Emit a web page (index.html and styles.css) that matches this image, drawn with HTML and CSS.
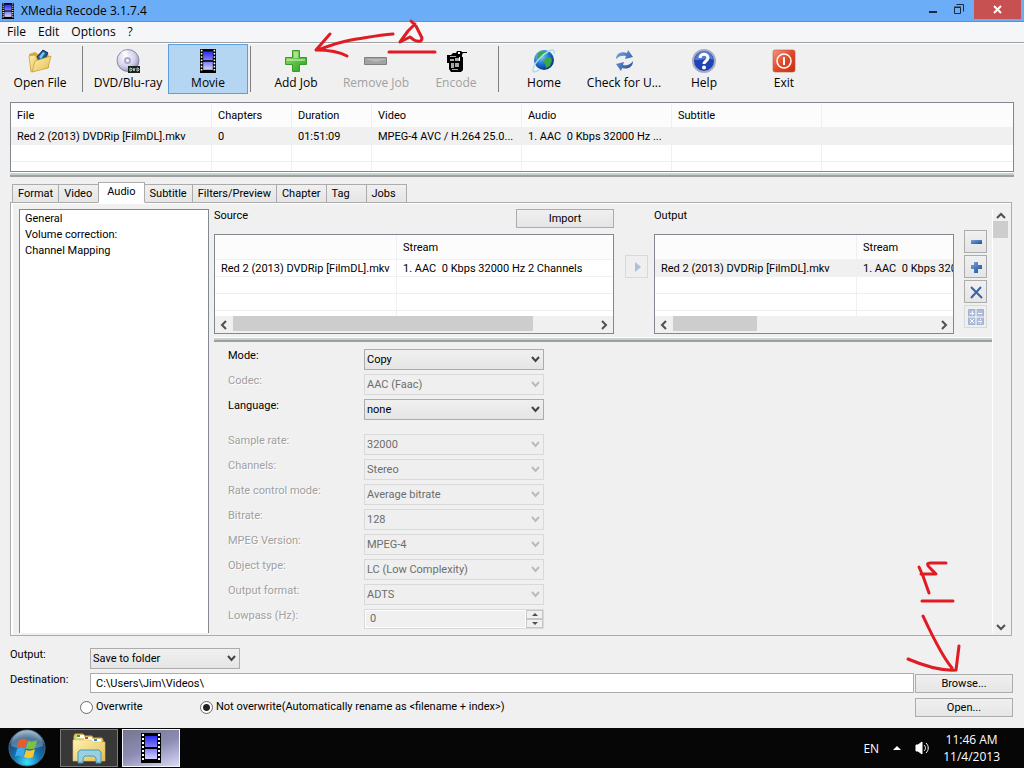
FILE: index.html
```html
<!DOCTYPE html>
<html lang="en">
<head>
	<meta charset="utf-8">
	<title>XMedia Recode 3.1.7.4</title>
	<link rel="stylesheet" href="styles.css">
</head>
<body>
	<!-- shared icons -->
	<svg class="defs" aria-hidden="true">
		<defs>
			<linearGradient id="frame" x1="0" y1="0" x2="0" y2="1">
				<stop offset="0" stop-color="#2a2af0"/><stop offset="1" stop-color="#8080f8"/>
			</linearGradient>
			<linearGradient id="frame2" x1="0" y1="0" x2="0" y2="1">
				<stop offset="0" stop-color="#8080f8"/><stop offset="1" stop-color="#d4d4fc"/>
			</linearGradient>
			<linearGradient id="green" x1="0" y1="0" x2="1" y2="1">
				<stop offset="0" stop-color="#9be06e"/><stop offset="1" stop-color="#26a01c"/>
			</linearGradient>
			<linearGradient id="blue" x1="0" y1="0" x2="1" y2="1">
				<stop offset="0" stop-color="#7ba7de"/><stop offset="1" stop-color="#1c4c96"/>
			</linearGradient>
			<linearGradient id="red" x1="0" y1="0" x2="1" y2="1">
				<stop offset="0" stop-color="#f4967e"/><stop offset=".5" stop-color="#e0492a"/><stop offset="1" stop-color="#cc2c08"/>
			</linearGradient>
			<linearGradient id="paper" x1="0" y1="0" x2="1" y2="1">
				<stop offset="0" stop-color="#fdf3b4"/><stop offset="1" stop-color="#e6bd4c"/>
			</linearGradient>
			<radialGradient id="disc" cx=".4" cy=".35" r=".7">
				<stop offset="0" stop-color="#fff"/><stop offset=".6" stop-color="#d3d0ec"/><stop offset="1" stop-color="#8d8ab4"/>
			</radialGradient>
			<radialGradient id="earth" cx=".35" cy=".3" r=".8">
				<stop offset="0" stop-color="#8fd6ff"/><stop offset=".5" stop-color="#1e75cf"/><stop offset="1" stop-color="#06246e"/>
			</radialGradient>
			<radialGradient id="orb" cx=".5" cy=".9" r=".9">
				<stop offset="0" stop-color="#3fe0ff"/><stop offset=".4" stop-color="#1377b5"/><stop offset=".75" stop-color="#1a4a78"/><stop offset="1" stop-color="#8fb3c9"/>
			</radialGradient>
			<symbol id="film" viewBox="0 0 20 30">
				<path fill="#000" d="M0 0h20v30H0z"/>
				<path fill="url(#frame)" d="M4 3h12v11H4z"/>
				<path fill="url(#frame2)" d="M4 16h12v10H4z"/>
				<path stroke="#fff" stroke-width="2" stroke-dasharray="2 2" d="M2 1v28M18 1v28"/>
			</symbol>
		</defs>
	</svg>

	<header class="titlebar">
		<svg class="title-icon" viewBox="0 0 20 30" preserveAspectRatio="none"><use href="#film"/></svg>
		<h1>XMedia Recode 3.1.7.4</h1>
		<button class="win-btn" aria-label="Minimize"><svg width="26" height="19"><path fill="#1c2a3c" d="M9 11h8v2H9z"/></svg></button>
		<button class="win-btn" aria-label="Restore"><svg width="26" height="19" fill="none" stroke="#1c2a3c"><path d="M10.500 4.500h7v7"/><path d="M8.500 7.500h6v6h-6z"/><path d="M8 7h7"/></svg></button>
		<button class="win-btn close" aria-label="Close"><svg width="47" height="19"><path stroke="#fff" stroke-width="2" d="M20 6l7 7M27 6l-7 7"/></svg></button>
	</header>

	<nav class="menubar">
		<a href="#">File</a>
		<a href="#">Edit</a>
		<a href="#">Options</a>
		<a href="#">?</a>
	</nav>

	<div class="toolbar">
		<button class="tool">
			<svg viewBox="0 0 24 24"><path fill="#d9a93c" d="M1 5l6-2 3 2 9-1 2 3v12L3 22z"/><path fill="#1d5b97" stroke="#0c2e52" d="M8 9l7-8 5 3-5 9z"/><path fill="#7cc4ee" d="M11 8l4-5 2 1-4 6z"/><path fill="url(#paper)" stroke="#c89a35" stroke-width=".7" d="M1 7l6-1 2 3 1 12-7 2z"/><path fill="url(#paper)" stroke="#c89a35" stroke-width=".7" d="M7 12l16-5-3 12-16 4z"/></svg>
			<span>Open File</span>
		</button>
		<span class="sep"></span>
		<button class="tool">
			<svg viewBox="0 0 24 24"><circle cx="12" cy="11.500" r="11" fill="url(#disc)" stroke="#77779a" stroke-width=".8"/><path fill="#fff" opacity=".7" d="M12 11L5 3l6-2z"/><circle cx="11.500" cy="11.500" r="3.500" fill="#a9a7d2"/><circle cx="11.500" cy="11.500" r="1.500" fill="#fff"/><path fill="#182420" d="M12 17h12v7H12z"/><path fill="none" stroke="#dfe8e2" stroke-width=".8" d="M14 19v3h1l1-1v-1l-1-1zM17 19l1 3 1-3M21 19v3h1l1-1v-1l-1-1z"/></svg>
			<span>DVD/Blu-ray</span>
		</button>
		<button class="tool active">
			<svg viewBox="0 0 24 24"><use href="#film" x="4" y="0" width="16" height="24"/></svg>
			<span>Movie</span>
		</button>
		<span class="sep"></span>
		<button class="tool">
			<svg viewBox="0 0 24 24"><path fill="url(#green)" stroke="#3c9a2c" d="M8.500 1.500h7v7h7v7h-7v7h-7v-7h-7v-7h7z"/><path fill="#d7f5c4" opacity=".55" d="M10 3h4v6h-4zM3 10h18v2H3z"/></svg>
			<span>Add Job</span>
		</button>
		<button class="tool" disabled>
			<svg viewBox="0 0 24 24"><path fill="#a3a3a3" stroke="#808080" d="M.500 8.500h22v7H.500z"/><path fill="#b8b8b8" d="M2 10h20l-10 3z"/></svg>
			<span>Remove Job</span>
		</button>
		<button class="tool" disabled>
			<svg viewBox="0 0 24 24"><path fill="#000" d="M3 6h4l2-2h3l1-2h4l1 1h5v1h-4l-1 2v2h1v13l-2 2H7l-2-3v-6H3z"/><path fill="#a8a8a8" d="M6 7h6v1H6zM6 10h4v2H6zM11 9h4v3h-4zM7 14h3v5H7zM11 14h4v4h-4zM8 20h6v1H8z"/><path fill="#fff" d="M14 3h2v2h-2zM15 8h1v4h-1z"/></svg>
			<span>Encode</span>
		</button>
		<span class="sep"></span>
		<button class="tool">
			<svg viewBox="0 0 24 24"><circle cx="12" cy="11" r="10" fill="url(#earth)"/><path fill="#37a845" d="M6 4l4-2 4 1-2 4-3 1-1 3-3-2zM14 9l4-1 2 3-2 6-4 2-1-4-2-2z"/><path fill="none" stroke="#aadcf8" stroke-width="1.500" d="M22 5c1-4-1-5-5-3C9 6 1 16 1 21c0 3 4 2 7-1"/></svg>
			<span>Home</span>
		</button>
		<button class="tool">
			<svg viewBox="0 0 24 24"><path fill="url(#blue)" d="M4 10C4 5 9 2 15 4l1-3 5 7-8 2 1-3C10 6 7 7 4 10zM21 12c0 6-5 9-11 7l-1 3-5-7 8-2-1 3c4 1 7 0 10-4z"/></svg>
			<span>Check for U...</span>
		</button>
		<button class="tool">
			<svg viewBox="0 0 24 24"><circle cx="12" cy="12" r="11" fill="#1f43b4" stroke="#a4abc4" stroke-width="2"/><path fill="#7c9bea" opacity=".6" d="M3 11a9 9 0 0 1 18 0c-5-3-12 1-18 0z"/><path fill="none" stroke="#fff" stroke-width="3" d="M8 9c0-5 8-5 8 0 0 3-4 3-4 6"/><circle cx="12" cy="18.500" r="2" fill="#fff"/></svg>
			<span>Help</span>
		</button>
		<button class="tool">
			<svg viewBox="0 0 24 24"><rect x="1" y="1" width="22" height="22" rx="2" fill="url(#red)" stroke="#b8573c" stroke-width=".6"/><circle cx="12" cy="12" r="7" fill="none" stroke="#fff" stroke-width="1.500"/><path stroke="#fff" stroke-width="2" d="M12 8v8"/></svg>
			<span>Exit</span>
		</button>

		<!-- pen marks over the Add Job button -->
		<svg class="pen pen-top" width="130" height="50" viewBox="310 14 130 50">
			<path d="M393 34c-15 1-28 4-42 6-12 2-20 5-33 10M330 34l-14 16c12 0 22 1 31 6M411 21l5 5 6 12c0 4-4 4-8 2l-4-3-10 5 8-11 7-7M389 52h46"/>
		</svg>
	</div>

	<main class="window">
		<div class="list files">
			<table>
				<colgroup><col class="c-file"><col class="c-short"><col class="c-short"><col class="c-mid"><col class="c-mid"><col class="c-mid"><col></colgroup>
				<thead>
					<tr><th>File</th><th>Chapters</th><th>Duration</th><th>Video</th><th>Audio</th><th>Subtitle</th><th></th></tr>
				</thead>
				<tbody>
					<tr class="selected"><td>Red 2 (2013) DVDRip [FilmDL].mkv</td><td>0</td><td>01:51:09</td><td>MPEG-4 AVC / H.264 25.0...</td><td>1. AAC&nbsp; 0 Kbps 32000 Hz ...</td><td></td><td></td></tr>
					<tr><td></td><td></td><td></td><td></td><td></td><td></td><td></td></tr>
					<tr><td></td><td></td><td></td><td></td><td></td><td></td><td></td></tr>
				</tbody>
			</table>
		</div>
		<div class="splitter"></div>

		<div class="tabs" role="tablist">
			<button role="tab">Format</button>
			<button role="tab">Video</button>
			<button role="tab" class="current" aria-selected="true">Audio</button>
			<button role="tab">Subtitle</button>
			<button role="tab">Filters/Preview</button>
			<button role="tab">Chapter</button>
			<button role="tab">Tag</button>
			<button role="tab">Jobs</button>
		</div>

		<section class="panel">
			<ul class="tree">
				<li>General</li>
				<li>Volume correction:</li>
				<li>Channel Mapping</li>
			</ul>

			<div class="content">
				<div class="streams">
					<div class="stream">
						<div class="stream-head">
							<h2>Source</h2>
							<button class="btn">Import</button>
						</div>
						<div class="list">
							<div class="rows">
								<table>
									<colgroup><col class="c-name"><col></colgroup>
									<thead><tr><th></th><th>Stream</th></tr></thead>
									<tbody>
										<tr><td>Red 2 (2013) DVDRip [FilmDL].mkv</td><td>1. AAC&nbsp; 0 Kbps 32000 Hz 2 Channels</td></tr>
										<tr><td></td><td></td></tr>
										<tr><td></td><td></td></tr>
										<tr><td></td><td></td></tr>
									</tbody>
								</table>
							</div>
							<div class="hscroll">
								<button aria-label="Scroll left"><svg width="8" height="10"><path d="M6 1L2 5l4 4"/></svg></button>
								<div class="track"><div class="thumb wide"></div></div>
								<button aria-label="Scroll right"><svg width="8" height="10"><path d="M2 1l4 4-4 4"/></svg></button>
							</div>
						</div>
					</div>

					<button class="icon-btn move" disabled aria-label="Add stream"><svg width="16" height="16"><path fill="#9db4d6" d="M6 3l6 5-6 5z"/></svg></button>

					<div class="stream">
						<div class="stream-head">
							<h2>Output</h2>
						</div>
						<div class="list">
							<div class="rows">
								<table>
									<colgroup><col class="c-name out"><col></colgroup>
									<thead><tr><th></th><th>Stream</th></tr></thead>
									<tbody>
										<tr class="selected"><td>Red 2 (2013) DVDRip [FilmDL].mkv</td><td class="clip">1. AAC&nbsp; 0 Kbps 32000 Hz 2 Channels</td></tr>
										<tr><td></td><td></td></tr>
										<tr><td></td><td></td></tr>
										<tr><td></td><td></td></tr>
									</tbody>
								</table>
							</div>
							<div class="hscroll">
								<button aria-label="Scroll left"><svg width="8" height="10"><path d="M6 1L2 5l4 4"/></svg></button>
								<div class="track"><div class="thumb narrow"></div></div>
								<button aria-label="Scroll right"><svg width="8" height="10"><path d="M2 1l4 4-4 4"/></svg></button>
							</div>
						</div>
					</div>

					<div class="side">
						<button class="icon-btn" aria-label="Remove"><svg width="16" height="16"><path fill="url(#blue)" d="M3 6h11v4H3z"/></svg></button>
						<button class="icon-btn" aria-label="Add"><svg width="16" height="16"><path fill="url(#blue)" d="M6 3h4v3h4v4h-4v4H6v-4H3V6h3z"/></svg></button>
						<button class="icon-btn" aria-label="Delete"><svg width="16" height="16"><path stroke="#3a62a8" stroke-width="2" d="M3 3l11 11M13 3L3 14"/></svg></button>
						<button class="icon-btn" disabled aria-label="Calculator"><svg width="18" height="18"><path fill="#9fb3d6" stroke="#8fa5ca" d="M1.500 1.500h15v15h-15z"/><path stroke="#fff" d="M3 5.500h4M5.500 3v4M11 5.500h4M3 11l4 4M7 11l-4 4M11 13.500h4M13.500 11v1M13.500 15v1M9 1v16M1 9h16"/></svg></button>
					</div>
				</div>
				<div class="splitter"></div>

				<form class="settings">
					<div class="fields">
						<label for="mode">Mode:</label>
						<select id="mode"><option>Copy</option></select>
						<label for="codec" class="off">Codec:</label>
						<select id="codec" disabled><option>AAC (Faac)</option></select>
						<label for="language">Language:</label>
						<select id="language"><option>none</option></select>
					</div>
					<div class="fields">
						<label for="samplerate" class="off">Sample rate:</label>
						<select id="samplerate" disabled><option>32000</option></select>
						<label for="channels" class="off">Channels:</label>
						<select id="channels" disabled><option>Stereo</option></select>
						<label for="ratemode" class="off">Rate control mode:</label>
						<select id="ratemode" disabled><option>Average bitrate</option></select>
						<label for="bitrate" class="off">Bitrate:</label>
						<select id="bitrate" disabled><option>128</option></select>
						<label for="mpeg" class="off">MPEG Version:</label>
						<select id="mpeg" disabled><option>MPEG-4</option></select>
						<label for="objecttype" class="off">Object type:</label>
						<select id="objecttype" disabled><option>LC (Low Complexity)</option></select>
						<label for="format" class="off">Output format:</label>
						<select id="format" disabled><option>ADTS</option></select>
						<label for="lowpass" class="off">Lowpass (Hz):</label>
						<div class="spin">
							<input id="lowpass" type="text" value="0" disabled>
							<div class="spin-btns">
								<button type="button" disabled aria-label="Increase"><svg width="6" height="3"><path d="M0 3l3-3 3 3z"/></svg></button>
								<button type="button" disabled aria-label="Decrease"><svg width="6" height="3"><path d="M0 0l3 3 3-3z"/></svg></button>
							</div>
						</div>
					</div>
				</form>
			</div>

			<div class="vscroll">
				<button aria-label="Scroll up"><svg width="10" height="7"><path d="M1 6l4-4 4 4"/></svg></button>
				<div class="track"><div class="thumb"></div></div>
				<button aria-label="Scroll down"><svg width="10" height="7"><path d="M1 1l4 4 4-4"/></svg></button>
			</div>
		</section>

		<form class="target">
			<label for="output">Output:</label>
			<select id="output"><option>Save to folder</option></select>
			<span></span>
			<label for="destination">Destination:</label>
			<input id="destination" type="text" value="C:\Users\Jim\Videos\">
			<button type="button" class="btn">Browse...</button>
			<span></span>
			<div class="radios">
				<label><input type="radio" name="overwrite">Overwrite</label>
				<label><input type="radio" name="overwrite" checked>Not overwrite(Automatically rename as &lt;filename + index&gt;)</label>
			</div>
			<button type="button" class="btn">Open...</button>

			<!-- pen marks pointing at Browse -->
			<svg class="pen pen-bottom" width="60" height="120" viewBox="904 556 60 120">
				<path d="M946 563h-15c-6 0-3 3 0 6l5 5h-15M919 567l4 9 6 17M922 601h31M923 616c7 15 18 39 29 52M959 646l-3 24c-14 1-34-5-48-11"/>
			</svg>
		</form>
	</main>

	<footer class="taskbar">
		<button class="start" aria-label="Start">
			<svg width="38" height="38" viewBox="0 0 38 38"><circle cx="19" cy="19" r="18" fill="url(#orb)" stroke="#4a6b80"/><path fill="#fff" opacity=".25" d="M3 17a16 16 0 0 1 32 0c-10 4-22 4-32 0z"/><path fill="#ee5a24" d="M11 11c3-2 5-1 8 0l-2 8c-3-1-5-2-8 0z"/><path fill="#7dc142" d="M20 12c3 1 5 1 9-1l-2 8c-4 2-6 1-9 0z"/><path fill="#3fa9ea" d="M9 20c3-2 5-1 8 0l-2 8c-3-1-5-2-8 0z"/><path fill="#fbc62d" d="M18 21c3 1 5 1 9-1l-2 8c-4 2-6 1-9 0z"/></svg>
		</button>
		<button class="task" aria-label="Explorer">
			<svg width="34" height="32" viewBox="0 0 34 32"><path fill="#e2cc7c" stroke="#c7a94f" d="M2 4l1-2h8l2 2h7l1 2h9l1 2v20H2z"/><path fill="#fff" d="M5 3h7v3H5zM12 5h8v3h-8zM20 7h9v3h-9z"/><path fill="#1fa33a" d="M5 3h3v2H5z"/><path fill="#d2401f" d="M13 5h3v2h-3z"/><path fill="#2b8bd0" d="M22 7h3v2h-3z"/><path fill="url(#paper)" stroke="#d6bb66" stroke-width=".6" d="M1 8h18l2 2h12v19H1z"/><path fill="#8fd0ee" fill-opacity=".9" stroke="#4797bd" d="M6 31V20l2-2h19l2 2v11h-5v-5l-2-2h-9l-2 2v5z"/></svg>
		</button>
		<button class="task current" aria-label="XMedia Recode">
			<svg width="20" height="30"><use href="#film"/></svg>
		</button>
		<div class="tray">
			<span>EN</span>
			<svg width="8" height="5"><path fill="#fff" d="M0 4l4-4 4 4z"/></svg>
			<svg width="14" height="14" fill="none" stroke="#fff"><path fill="#fff" d="M1 4h2l4-3v12l-4-3H1z"/><path d="M9 4c2 2 2 4 0 6M11 2c3 3 3 7 0 10"/></svg>
			<time>11:46 AM<br>11/4/2013</time>
		</div>
	</footer>
</body>
</html>
```
FILE: styles.css
```css
* { box-sizing: border-box; }

body {
	margin: 0;
	min-height: 100vh;
	display: flex;
	flex-direction: column;
	background: #f0f0f0;
	color: #000;
	font: 11px/16px Roboto, "Liberation Sans", sans-serif;
}

button, select, input {
	font: inherit;
	color: inherit;
}
button {
	padding: 0;
	border: 0;
	background: none;
}
h1, h2 {
	margin: 0;
	font: inherit;
}
svg { display: block; }
.defs { position: absolute; width: 0; height: 0; }

/* title bar */
.titlebar {
	display: flex;
	align-items: flex-start;
	height: 22px;
	background: #6badf6;
	border-bottom: 1px solid #5a92cf;
}
.title-icon {
	width: 12px;
	height: 16px;
	margin: 3px 7px 0 2px;
}
.titlebar h1 {
	flex: 1;
	font: 12px/22px "Open Sans", sans-serif;
}
.win-btn.close {
	margin: 0 3px 0 2px;
	background: #c75050;
}

/* menu */
.menubar {
	display: flex;
	gap: 12px;
	height: 21px;
	padding: 0 7px;
	background: #f5f6f7;
	border-bottom: 1px solid #a0a0a0;
	font: 12px/20px "Open Sans", sans-serif;
}
.menubar a {
	color: #000;
	text-decoration: none;
}

/* toolbar */
.toolbar {
	position: relative;
	display: flex;
	height: 52px;
	border-top: 1px solid #fff;
	font: 12px/16px "Open Sans", sans-serif;
}
.tool {
	display: flex;
	flex-direction: column;
	align-items: center;
	gap: 2px;
	width: 80px;
	height: 50px;
	padding-top: 4px;
	border: 1px solid transparent;
	white-space: nowrap;
}
.tool svg {
	width: 24px;
	height: 24px;
}
.tool:disabled { color: #a0a0a0; }
.tool.active {
	background: #b5d6f3;
	border-color: #5a9fdf;
}
.sep {
	width: 8px;
	height: 46px;
	margin-top: 2px;
	background: linear-gradient(#808080, #808080) 2px 0 / 1px 100% no-repeat;
}

/* red pen */
.pen {
	position: absolute;
	pointer-events: none;
	fill: none;
	stroke: #e01b24;
	stroke-width: 3;
	stroke-linecap: round;
	stroke-linejoin: round;
}
.pen-top { left: 310px; top: -30px; }
.pen-bottom { right: 50px; top: -80px; }

/* main */
.window {
	flex: 1;
	display: flex;
	flex-direction: column;
	padding: 7px 10px 11px;
}

.list {
	overflow: hidden;
	background: #fff;
	border: 1px solid #828790;
}
.files { height: 70px; }
.list table {
	width: 100%;
	table-layout: fixed;
	border-collapse: separate;
	border-spacing: 0;
}
.list th, .list td {
	padding: 1px 5px 0 6px;
	border-right: 1px solid #edf0f5;
	border-bottom: 1px solid #f0f0f0;
	overflow: hidden;
	white-space: nowrap;
	text-align: left;
	font-weight: normal;
}
.list th:last-child, .list td:last-child { border-right: 0; }
.list th {
	height: 25px;
	padding-top: 2px;
	background: #fcfcfc;
}
.list td { height: 17px; line-height: 15px; }
.selected td { background: #f0f0f0; }
.c-file { width: 201px; }
.c-short { width: 80px; }
.c-mid { width: 150px; }
.c-name { width: 182px; }
.c-name.out { width: 202px; }

.splitter {
	height: 5px;
	background: #c5d0d0;
	border-top: 1px solid #fff;
	border-bottom: 2px solid #a0a0a0;
}

/* tabs */
.tabs {
	display: flex;
	align-items: flex-end;
	height: 26px;
	padding-left: 2px;
	margin-bottom: -1px;
}
.tabs button {
	min-width: 41px;
	height: 19px;
	padding: 0 5px;
	text-align: left;
	background: linear-gradient(#f0f0f0, #e5e5e5);
	border: 1px solid #acacac;
	margin-right: -1px;
}
.tabs .current {
	z-index: 1;
	height: 21px;
	padding: 0 8px 2px;
	background: #fff;
	border-bottom-color: #fff;
}

.panel {
	flex: 1;
	display: flex;
	margin-right: 2px;
	padding: 6px 2px 2px 8px;
	border: 1px solid #acacac;
	box-shadow: inset 2px 0 #fff, inset 0 1px #fff;
}
.tree {
	width: 190px;
	margin: 0 5px 0 0;
	padding: 1px 5px;
	background: #fff;
	border: 1px solid #828790;
	border-bottom: 0;
	list-style: none;
}
.content {
	flex: 1;
	min-width: 0;
}
.streams {
	display: grid;
	grid-template-columns: minmax(0, 4fr) 40px minmax(0, 3fr) 38px;
	height: 128px;
}
.stream {
	display: flex;
	flex-direction: column;
	min-width: 0;
}
.stream-head {
	display: flex;
	justify-content: space-between;
	align-items: flex-start;
	height: 25px;
	line-height: 14px;
}
.stream .list {
	display: flex;
	flex-direction: column;
	height: 100px;
}
.rows {
	flex: 1;
	min-height: 0;
	overflow: hidden;
}
.btn {
	width: 98px;
	height: 19px;
	line-height: 16px;
	background: linear-gradient(#f0f0f0, #e5e5e5);
	border: 1px solid #acacac;
}

.hscroll {
	flex: none;
	display: flex;
	height: 17px;
	background: #f0f0f0;
}
.hscroll button {
	width: 18px;
	display: grid;
	place-items: center;
}
.hscroll path, .vscroll path {
	fill: none;
	stroke: #505050;
	stroke-width: 2;
}
.track { flex: 1; }
.thumb { background: #cdcdcd; }
.hscroll .thumb { height: 15px; }
.thumb.wide { width: 83%; }
.thumb.narrow { width: 32%; }

.icon-btn {
	display: grid;
	place-items: center;
	width: 23px;
	height: 23px;
	background: linear-gradient(#f0f0f0, #e5e5e5);
	border: 1px solid #acacac;
}
.icon-btn:disabled {
	background: #efefef;
	border-color: #d9d9d9;
}
.icon-btn:disabled svg { opacity: .8; }
.move { margin: 46px 0 0 11px; }
.side {
	display: flex;
	flex-direction: column;
	gap: 2px;
	padding: 21px 0 0 10px;
}

select {
	appearance: none;
	height: 21px;
	padding: 0 20px 0 2px;
	border: 1px solid #acacac;
	border-radius: 0;
	background: url("data:image/svg+xml,%3Csvg xmlns='http://www.w3.org/2000/svg' width='9' height='7'%3E%3Cpath d='M1 1l3.500 4L8 1' fill='none' stroke='%23444' stroke-width='2'/%3E%3C/svg%3E") right 3px center no-repeat, linear-gradient(#f0f0f0, #e5e5e5);
}
select:disabled {
	color: #6d6d6d;
	opacity: 1;
	border-color: #d9d9d9;
	background: url("data:image/svg+xml,%3Csvg xmlns='http://www.w3.org/2000/svg' width='9' height='7'%3E%3Cpath d='M1 1l3.500 4L8 1' fill='none' stroke='%23bbb' stroke-width='2'/%3E%3C/svg%3E") right 3px center no-repeat, #efefef;
}

.settings {
	display: grid;
	gap: 14px;
	padding: 7px 0 0 14px;
}
.fields {
	display: grid;
	grid-template-columns: 136px 180px;
	grid-auto-rows: 21px;
	row-gap: 4px;
}
.fields label { line-height: 14px; }
.off {
	color: #a0a0a0;
	text-shadow: 1px 1px #fff;
}
.spin {
	display: flex;
	height: 20px;
	border: 1px solid #d9d9d9;
}
.spin input {
	flex: 1;
	min-width: 0;
	padding: 0 4px;
	color: #6d6d6d;
	border: 1px solid #fff;
	background: #f0f0f0;
}
.spin-btns {
	display: flex;
	flex-direction: column;
	width: 17px;
}
.spin-btns button {
	flex: 1;
	display: grid;
	place-items: center;
	border: 1px solid #c6c6c6;
}
.spin-btns path { fill: #505050; }

.vscroll {
	display: flex;
	flex-direction: column;
	width: 17px;
	border-left: 1px solid #fff;
}
.vscroll button {
	height: 12px;
	display: grid;
	place-items: center;
}
.vscroll .thumb {
	height: 17px;
	width: 15px;
}

/* destination */
.target {
	position: relative;
	display: grid;
	grid-template-columns: 80px 1fr 98px;
	grid-template-rows: 21px 20px 20px;
	row-gap: 4px;
	padding: 12px 1px 0 0;
}
.target > label { line-height: 14px; }
.target .btn { margin-top: 1px; }
#output { width: 150px; }
#destination {
	height: 20px;
	margin-right: 1px;
	padding: 0 5px;
	border: 1px solid #acacac;
	background: #fff;
}
.radios {
	display: grid;
	grid-template-columns: 120px 1fr;
	align-items: center;
	margin-left: -10px;
}
.radios label {
	display: flex;
	align-items: center;
	gap: 3px;
}
.radios input {
	appearance: none;
	width: 13px;
	height: 13px;
	margin: 0;
	border: 1px solid #6b6b6b;
	border-radius: 50%;
	background: #fff;
}
.radios input:checked { background: radial-gradient(#222 0 3px, #fff 4px); }

/* taskbar */
.taskbar {
	display: flex;
	align-items: center;
	height: 40px;
	padding: 0 24px 0 8px;
	background: #060606;
	color: #fff;
	font: 12px/17px "Open Sans", sans-serif;
}
.start { margin-right: 14px; }
.task {
	display: grid;
	place-items: center;
	width: 58px;
	height: 38px;
	margin-right: 4px;
	background: #383838;
	border: 1px solid #7c7c7c;
}
.task.current {
	background: linear-gradient(160deg, #76768e, #8c8cb4 50%, #d8d8f6);
	border-color: #f4f4ff;
}
.tray {
	display: flex;
	align-items: center;
	gap: 14px;
	margin-left: auto;
}
.tray time { text-align: center; }
```
